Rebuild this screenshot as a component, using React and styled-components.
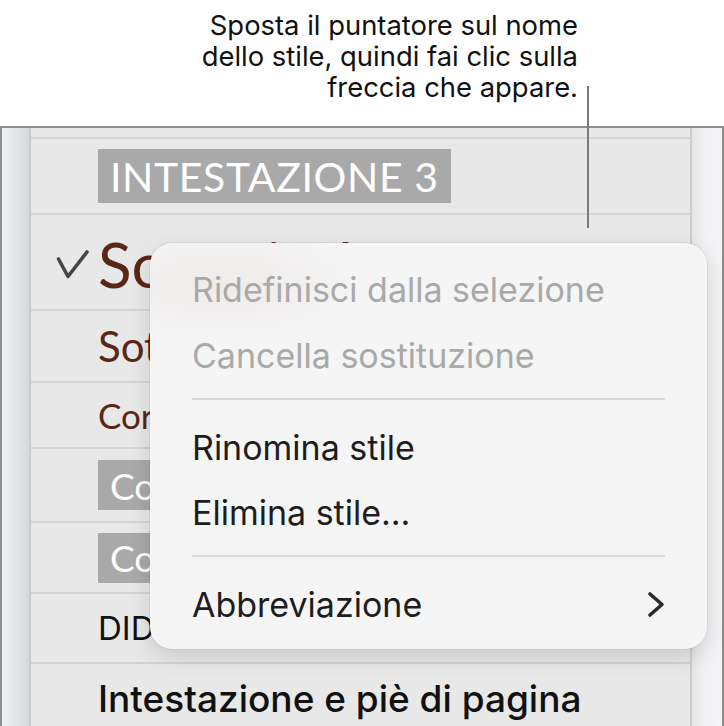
import styled, { createGlobalStyle } from "styled-components";

const GlobalStyle = createGlobalStyle`
  html, body {
    margin: 0;
    padding: 0;
    background: #ffffff;
  }
  * {
    box-sizing: border-box;
  }
`;

const Page = styled.div`
  position: relative;
  width: 724px;
  height: 726px;
  overflow: hidden;
  display: flex;
  flex-direction: column;
  background: #ffffff;
  font-family: Inter, "Liberation Sans", sans-serif;
`;

const Caption = styled.div`
  height: 126px;
  padding: 10px 146px 0 0;
  text-align: right;
  font-size: 27.4px;
  line-height: 31px;
  color: #111111;
`;

const Panel = styled.div`
  flex: 1;
  display: flex;
  border: 2px solid #8d8d8d;
  border-bottom: none;
  overflow: hidden;
`;

const LeftRail = styled.div`
  width: 29px;
  background: linear-gradient(to right, #eef0f2, #e2e3e6 60%, #d8d9dc);
  border-right: 2px solid #c9c9c9;
`;

const RightRail = styled.div`
  width: 32px;
  background: linear-gradient(to right, #e6e6e8, #f1f1f3 40%, #f4f4f6);
  border-left: 2px solid #cdcdcd;
`;

const StyleList = styled.div`
  flex: 1;
  display: flex;
  flex-direction: column;
  background: #e8e8e8;
`;

const StyleRow = styled.div`
  height: ${(p) => p.$h}px;
  flex-shrink: 0;
  display: flex;
  align-items: center;
  padding-top: ${(p) => p.$shift || 0}px;
  border-bottom: 2px solid #d3d3d3;
  white-space: nowrap;
  overflow: hidden;
`;

const CheckCell = styled.div`
  width: 67px;
  flex-shrink: 0;
  display: flex;
  justify-content: flex-end;
  padding-right: 9px;
`;

const TagLabel = styled.span`
  display: inline-flex;
  align-items: center;
  height: ${(p) => p.$h || 54}px;
  padding: 0 12px;
  background: #a9a9a9;
  color: #ffffff;
  font-family: Lato, "Open Sans", sans-serif;
  font-weight: 400;
  font-size: ${(p) => p.$size}px;
  letter-spacing: ${(p) => p.$spacing || 0}px;
`;

const BrownLabel = styled.span`
  color: #5a2615;
  font-family: Lato, "Open Sans", sans-serif;
  font-weight: 400;
  font-size: ${(p) => p.$size}px;
`;

const PlainLabel = styled.span`
  color: #111111;
  font-family: Inter, "Liberation Sans", sans-serif;
  font-weight: ${(p) => p.$weight || 400};
  font-size: ${(p) => p.$size}px;
`;

const Leader = styled.div`
  position: absolute;
  left: 587px;
  top: 86px;
  width: 2px;
  height: 142px;
  background: #7b7b7b;
`;

const Menu = styled.div`
  position: absolute;
  left: 150px;
  top: 243px;
  width: 557px;
  height: 406px;
  padding: 14px 42px 12px 42px;
  border-radius: 22px;
  background:
    radial-gradient(ellipse 150px 60px at 70px 40px, rgba(150, 100, 80, 0.07), transparent),
    #f5f5f5;
  box-shadow: 0 0 0 1px rgba(0, 0, 0, 0.05), 0 8px 22px rgba(0, 0, 0, 0.13);
  display: flex;
  flex-direction: column;
`;

const MenuItem = styled.div`
  height: 66px;
  display: flex;
  align-items: center;
  justify-content: space-between;
  font-size: 34px;
  color: ${(p) => (p.$disabled ? "#a9a9a9" : "#1d1d1d")};
`;

const Separator = styled.div`
  height: 2px;
  margin: 10px 0 14px;
  background: #dadada;
`;

const Check = () => (
  <svg width="34" height="30" viewBox="0 0 34 30">
    <path
      d="M3.5 10 L13 27.5 L32 3"
      fill="none"
      stroke="#454545"
      strokeWidth="3.6"
      strokeLinecap="round"
      strokeLinejoin="round"
    />
  </svg>
);

const Chevron = () => (
  <svg width="18" height="27" viewBox="0 0 18 27">
    <path
      d="M3 3 L15 13.5 L3 24"
      fill="none"
      stroke="#2a2a2a"
      strokeWidth="3.6"
      strokeLinecap="round"
      strokeLinejoin="round"
    />
  </svg>
);

export default function App() {
  return (
    <Page>
      <GlobalStyle />
      <Caption>
        Sposta il puntatore sul nome
        <br />
        dello stile, quindi fai clic sulla
        <br />
        freccia che appare.
      </Caption>

      <Panel>
        <LeftRail />
        <StyleList>
          <StyleRow $h={11} />
          <StyleRow $h={76}>
            <CheckCell />
            <TagLabel $size={41} $spacing={0.6}>
              INTESTAZIONE 3
            </TagLabel>
          </StyleRow>
          <StyleRow $h={96} $shift={4}>
            <CheckCell>
              <Check />
            </CheckCell>
            <BrownLabel $size={62}>Sottotitolo</BrownLabel>
          </StyleRow>
          <StyleRow $h={72}>
            <CheckCell />
            <BrownLabel $size={42}>Sottotitolo 2</BrownLabel>
          </StyleRow>
          <StyleRow $h={66}>
            <CheckCell />
            <BrownLabel $size={35}>Corpo</BrownLabel>
          </StyleRow>
          <StyleRow $h={74}>
            <CheckCell />
            <TagLabel $size={37} $h={50}>
              Corpo piccolo
            </TagLabel>
          </StyleRow>
          <StyleRow $h={71}>
            <CheckCell />
            <TagLabel $size={37} $h={50}>
              Corpo didascalia
            </TagLabel>
          </StyleRow>
          <StyleRow $h={70}>
            <CheckCell />
            <PlainLabel $size={33}>DIDASCALIA</PlainLabel>
          </StyleRow>
          <StyleRow $h={70}>
            <CheckCell />
            <PlainLabel $size={37} $weight={500}>
              Intestazione e piè di pagina
            </PlainLabel>
          </StyleRow>
        </StyleList>
        <RightRail />
      </Panel>

      <Leader />

      <Menu>
        <MenuItem $disabled>Ridefinisci dalla selezione</MenuItem>
        <MenuItem $disabled>Cancella sostituzione</MenuItem>
        <Separator />
        <MenuItem>Rinomina stile</MenuItem>
        <MenuItem>Elimina stile...</MenuItem>
        <Separator />
        <MenuItem>
          Abbreviazione
          <Chevron />
        </MenuItem>
      </Menu>
    </Page>
  );
}
